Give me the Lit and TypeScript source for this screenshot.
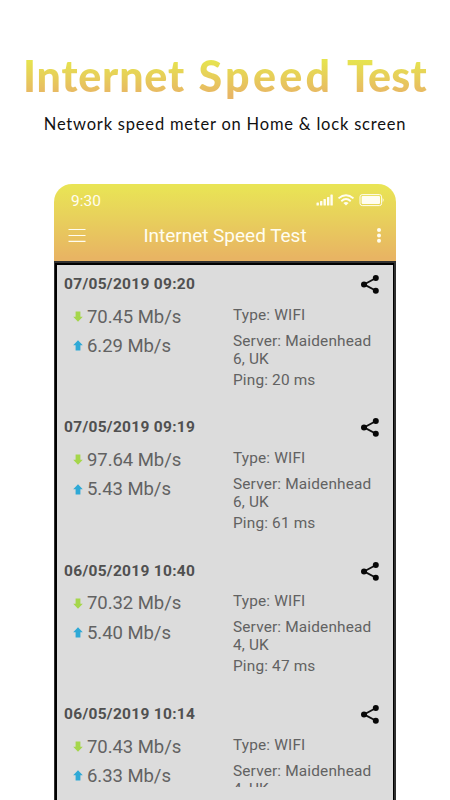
import { LitElement, html, css, svg } from "lit";
import { customElement, property } from "lit/decorators.js";

interface Result {
  date: string;
  down: string;
  up: string;
  city: string;
  region: string;
  ping?: string;
}

const results: Result[] = [
  { date: "07/05/2019 09:20", down: "70.45", up: "6.29", city: "Maidenhead", region: "6, UK", ping: "20" },
  { date: "07/05/2019 09:19", down: "97.64", up: "5.43", city: "Maidenhead", region: "6, UK", ping: "61" },
  { date: "06/05/2019 10:40", down: "70.32", up: "5.40", city: "Maidenhead", region: "4, UK", ping: "47" },
  { date: "06/05/2019 10:14", down: "70.43", up: "6.33", city: "Maidenhead", region: "4, UK" },
];

const arrow = svg`<path d="M5 0.3 L9.8 5.2 H7.4 V10.6 H2.6 V5.2 H0.2 Z"/>`;

@customElement("speed-result")
export class SpeedResult extends LitElement {
  @property({ attribute: false }) result!: Result;

  static styles = css`
    :host {
      display: block;
      height: 143.35px;
      flex: none;
      color: #626262;
    }
    .head {
      display: flex;
      justify-content: space-between;
      align-items: center;
      height: 38px;
      padding: 0 12px 0 6px;
    }
    .date {
      font-size: 15.5px;
      font-weight: 700;
      letter-spacing: 0.3px;
      color: #505050;
      white-space: nowrap;
    }
    .share {
      width: 20px;
      height: 20px;
      display: block;
    }
    .body {
      display: grid;
      grid-template-columns: 175px 1fr;
    }
    .speeds {
      padding-left: 15px;
      margin-top: -1px;
    }
    .speed {
      display: flex;
      align-items: center;
      height: 29.3px;
      font-size: 18.5px;
      letter-spacing: -0.05px;
      white-space: nowrap;
    }
    .arrow {
      width: 10px;
      height: 11px;
      margin-right: 4px;
      flex: none;
    }
    .down {
      fill: #a5d64b;
      transform: rotate(180deg);
    }
    .up {
      fill: #2fa9d6;
    }
    .details {
      font-size: 15.4px;
      letter-spacing: 0.16px;
      line-height: 18px;
      white-space: nowrap;
      padding-top: 2.7px;
    }
    .type {
      margin-bottom: 8px;
    }
    .server {
      margin-bottom: 3px;
    }
  `;

  render() {
    const r = this.result;
    return html`
      <div class="head">
        <span class="date">${r.date}</span>
        <svg class="share" viewBox="0 0 20 20">
          <path d="M16 4 L4 10.4 L16 16.8" fill="none" stroke="#111" stroke-width="1.8" />
          <circle cx="15.8" cy="4.1" r="3" fill="#080808" />
          <circle cx="4" cy="10.4" r="3" fill="#080808" />
          <circle cx="15.8" cy="16.8" r="3" fill="#080808" />
        </svg>
      </div>
      <div class="body">
        <div class="speeds">
          <div class="speed"><svg class="arrow down" viewBox="0 0 10 11">${arrow}</svg>${r.down} Mb/s</div>
          <div class="speed"><svg class="arrow up" viewBox="0 0 10 11">${arrow}</svg>${r.up} Mb/s</div>
        </div>
        <div class="details">
          <div class="type">Type: WIFI</div>
          <div class="server">Server: ${r.city}<br />${r.region}</div>
          ${r.ping ? html`<div>Ping: ${r.ping} ms</div>` : null}
        </div>
      </div>
    `;
  }
}

@customElement("app-root")
export class AppRoot extends LitElement {
  static styles = css`
    :host {
      display: flex;
      flex-direction: column;
      align-items: center;
      box-sizing: border-box;
      width: 450px;
      height: 800px;
      overflow: hidden;
      background: #fff;
      font-family: Roboto, "Liberation Sans", sans-serif;
    }
    .title {
      display: flex;
      gap: 13.5px;
      margin: 48px 0 0;
      height: 56px;
      font: 900 43px/56px Lato, sans-serif;
      white-space: nowrap;
      color: transparent;
      background: linear-gradient(#e6e44f 22%, #e8b665 84%);
      background-clip: text;
      -webkit-background-clip: text;
    }
    .internet {
      letter-spacing: 0.8px;
    }
    .speed {
      letter-spacing: 3.3px;
    }
    .test {
      letter-spacing: 0.2px;
    }
    .subtitle {
      margin: 8px 0 0;
      height: 24px;
      font: 400 16.5px/24px Lato, sans-serif;
      letter-spacing: 0.8px;
      white-space: nowrap;
      color: #111;
    }
    .phone {
      display: flex;
      flex-direction: column;
      width: 342px;
      height: 616px;
      margin-top: 48px;
      flex: none;
    }
    .top {
      height: 77px;
      flex: none;
      box-sizing: border-box;
      border-radius: 18px 18px 0 0;
      background: linear-gradient(#e9e455 3%, #e8d25b 40%, #e8b463 96%);
      color: #fffdf0;
    }
    .status {
      display: flex;
      justify-content: space-between;
      align-items: center;
      height: 33px;
      padding: 0 11px 0 17px;
      font-size: 15.5px;
    }
    .indicators {
      display: block;
      width: 70px;
      height: 14px;
      margin-top: -2px;
    }
    .bar {
      display: grid;
      grid-template-columns: 40px 1fr 40px;
      align-items: center;
      height: 36px;
    }
    .menu {
      display: block;
      width: 18px;
      height: 14px;
      margin-left: 14px;
    }
    .name {
      text-align: center;
      font-size: 19px;
      letter-spacing: -0.02px;
    }
    .more {
      display: block;
      width: 6px;
      height: 16px;
      margin-left: 20px;
    }
    .screen {
      flex: 1;
      min-height: 0;
      box-sizing: border-box;
      border: solid #303030;
      border-width: 2px 2px 0 1px;
      background: #dcdcdc;
    }
    .inner {
      height: 100%;
      box-sizing: border-box;
      border: solid #000;
      border-width: 2px 1px 0 2px;
      padding: 0 1px;
    }
    .list {
      display: flex;
      flex-direction: column;
      height: 522px;
      overflow: hidden;
    }
  `;

  render() {
    return html`
      <h1 class="title">
        <span class="internet">Internet</span>
        <span class="speed">Speed</span>
        <span class="test">Test</span>
      </h1>
      <p class="subtitle">Network speed meter on Home &amp; lock screen</p>
      <div class="phone">
        <div class="top">
          <div class="status">
            <span>9:30</span>
            <svg class="indicators" viewBox="0 0 70 14" fill="#fffdf0">
              <rect x="1.5" y="9.5" width="2.4" height="3" rx=".6" />
              <rect x="5" y="8" width="2.4" height="4.5" rx=".6" />
              <rect x="8.5" y="6" width="2.4" height="6.5" rx=".6" />
              <rect x="12" y="4" width="2.4" height="8.5" rx=".6" />
              <rect x="15.4" y="1.5" width="2.4" height="11" rx=".6" />
              <g fill="none" stroke="#fffdf0" stroke-width="1.9">
                <path d="M23.5 5.4 Q31 -1 38.5 5.4" />
                <path d="M26.3 8.2 Q31 4 35.7 8.2" />
              </g>
              <path d="M28.4 10.1 Q31 7.9 33.6 10.1 L31 12.6 Z" />
              <rect x="45" y="1.6" width="21.6" height="11" rx="2.2" fill="none" stroke="#fffdf0" stroke-width="1" />
              <rect x="46.6" y="3.1" width="18.4" height="8" rx="1" />
              <path d="M67.7 5 Q69.6 7 67.7 9.2 Z" />
            </svg>
          </div>
          <div class="bar">
            <svg class="menu" viewBox="0 0 18 14" stroke="#fffdf0" stroke-width="1.2">
              <path d="M0.5 1.5 H17.5 M0.5 7.5 H17.5 M0.5 13.4 H17.5" />
            </svg>
            <span class="name">Internet Speed Test</span>
            <svg class="more" viewBox="0 0 6 16" fill="#fffdf0">
              <circle cx="3" cy="2.9" r="2" />
              <circle cx="3" cy="8.4" r="2" />
              <circle cx="3" cy="13.7" r="2" />
            </svg>
          </div>
        </div>
        <div class="screen">
          <div class="inner">
            <div class="list">
              ${results.map((r) => html`<speed-result .result=${r}></speed-result>`)}
            </div>
          </div>
        </div>
      </div>
    `;
  }
}
